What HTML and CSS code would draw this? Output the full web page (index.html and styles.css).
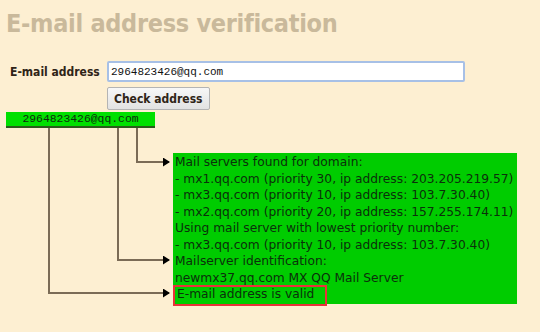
FILE: index.html
```html
<!DOCTYPE html>
<html lang="en">
<head>
    <meta charset="UTF-8">
    <title>E-mail address verification</title>
    <link rel="stylesheet" href="styles.css">
</head>
<body>
<div id="page">
    <h1 class="title">E-mail address verification</h1>

    <form class="check-form" onsubmit="return false;">
        <div class="row">
            <label for="email">E-mail address</label>
            <input id="email" type="text" value="2964823426@qq.com">
        </div>
        <div class="row row-btn">
            <button type="submit">Check address</button>
        </div>
    </form>

    <div class="result">
        <div class="address">2964823426@qq.com</div>
        <div class="log">
            <p>Mail servers found for domain:</p>
            <p>- mx1.qq.com (priority 30, ip address: 203.205.219.57)</p>
            <p>- mx3.qq.com (priority 10, ip address: 103.7.30.40)</p>
            <p>- mx2.qq.com (priority 20, ip address: 157.255.174.11)</p>
            <p>Using mail server with lowest priority number:</p>
            <p>- mx3.qq.com (priority 10, ip address: 103.7.30.40)</p>
            <p>Mailserver identification:</p>
            <p>newmx37.qq.com MX QQ Mail Server</p>
            <p class="valid">E-mail address is valid</p>
        </div>
        <!--连接线-->
        <svg class="wires" width="180" height="200" viewBox="0 0 180 200">
            <defs>
                <marker id="tip" markerWidth="7" markerHeight="9" refX="6" refY="4.5" orient="auto" markerUnits="userSpaceOnUse">
                    <path d="M0,0 L7,4.5 L0,9 Z" fill="#000"/>
                </marker>
            </defs>
            <polyline points="137,18 137,52 169,52" marker-end="url(#tip)"/>
            <polyline points="118,18 118,150 169,150" marker-end="url(#tip)"/>
            <polyline points="49,18 49,183 169,183" marker-end="url(#tip)"/>
        </svg>
    </div>
</div>
</body>
</html>
```

FILE: styles.css
```css
*{
    margin: 0;
    padding: 0;
}
body{
    background-color: #fdefd2;
    font-family: "DejaVu Sans Condensed", "DejaVu Sans", sans-serif;
    color: #2f2417;
}
#page{
    width: 540px;
    height: 332px;
    overflow: hidden;
}
.title{
    font-size: 25px;
    font-weight: bold;
    letter-spacing: -0.3px;
    color: #c9b99b;
    padding: 6px 0 0 6px;
    height: 55px;
    line-height: 36px;
}
.check-form .row{
    display: flex;
    align-items: center;
    padding-left: 10px;
}
.check-form label{
    width: 97px;
    font-size: 12px;
    font-weight: bold;
}
.check-form input{
    width: 358px;
    height: 21px;
    box-sizing: border-box;
    border: 2px solid #a7c0e6;
    border-radius: 2px;
    padding: 0 2px;
    font-family: "Liberation Mono", monospace;
    font-size: 11px;
    color: #111;
    background: #fff;
    outline: none;
}
.check-form .row-btn{
    padding-left: 107px;
    margin-top: 5px;
}
.check-form button{
    height: 23px;
    padding: 0 6px;
    font-family: "DejaVu Sans Condensed", "DejaVu Sans", sans-serif;
    font-size: 12px;
    font-weight: bold;
    color: #2f2417;
    background: linear-gradient(#f7f7f7, #e2e2e2);
    border: 1px solid #b4b4b4;
    border-radius: 2px;
}
.result{
    position: relative;
    padding: 2px 0 0 6px;
}
.address{
    width: 149px;
    height: 14px;
    background-color: #00e000;
    border-bottom: 2px solid #2c5a1c;
    font-family: "Liberation Mono", monospace;
    font-size: 11.4px;
    line-height: 14px;
    text-align: center;
    color: #0d2a0d;
}
.log{
    width: 344px;
    height: 151px;
    margin: 25px 0 0 167px;
    padding: 1px 0 0 2px;
    box-sizing: border-box;
    background-color: #00cc00;
    font-family: "DejaVu Sans", sans-serif;
    font-size: 12.25px;
    line-height: 16.5px;
    color: #0b300b;
    white-space: nowrap;
}
.log .valid{
    width: 154px;
    height: 21px;
    margin-left: -2px;
    padding-left: 2px;
    box-sizing: border-box;
    border: 2px solid #e8323a;
    line-height: 15px;
    position: relative;
    top: -1px;
}
.wires{
    position: absolute;
    left: 0;
    top: 0;
}
.wires polyline{
    fill: none;
    stroke: #7b6b56;
    stroke-width: 2;
}
```
